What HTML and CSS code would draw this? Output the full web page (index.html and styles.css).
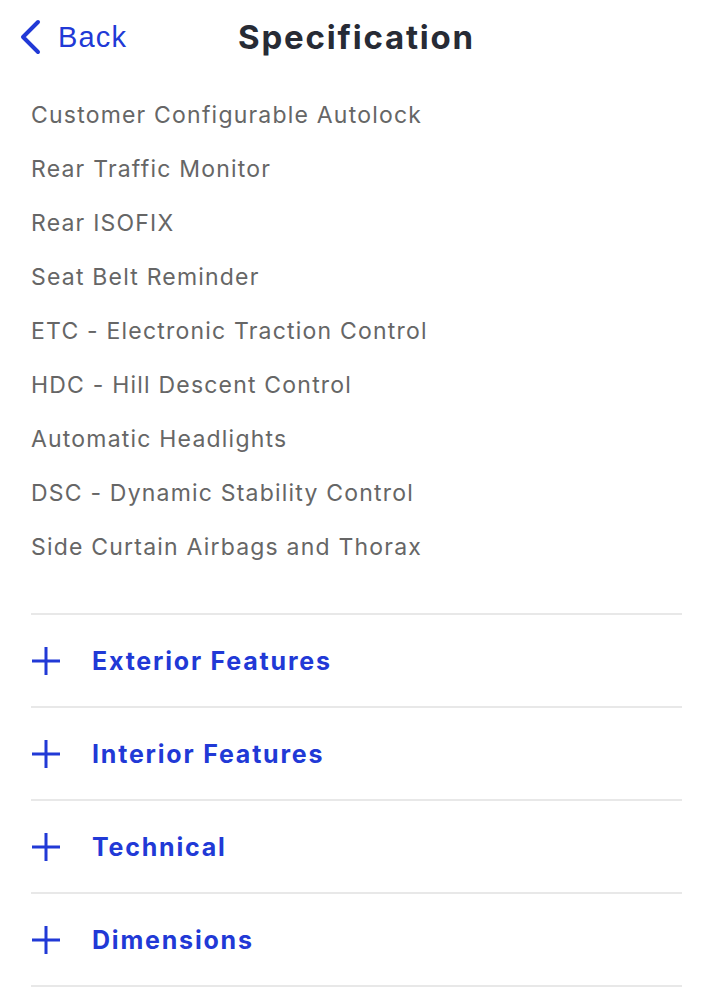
FILE: index.html
```html
<!DOCTYPE html>
<html lang="en">
<head>
    <meta charset="UTF-8">
    <meta name="viewport" content="width=device-width, initial-scale=1.0">
    <title>Specification</title>
    <link rel="stylesheet" href="styles.css">
</head>
<body>
    <div class="topbar">
        <a class="back" href="#">
            <svg class="chevron" width="24" height="36" viewBox="0 0 24 36">
                <path d="M20 3 L5 18 L20 33" fill="none" stroke="#2139d6" stroke-width="4" stroke-linecap="round" stroke-linejoin="round"/>
            </svg>
            <span>Back</span>
        </a>
        <h1 class="title">Specification</h1>
        <div></div>
    </div>

    <ul class="specList">
        <li>Customer Configurable Autolock</li>
        <li>Rear Traffic Monitor</li>
        <li>Rear ISOFIX</li>
        <li>Seat Belt Reminder</li>
        <li>ETC - Electronic Traction Control</li>
        <li>HDC - Hill Descent Control</li>
        <li>Automatic Headlights</li>
        <li>DSC - Dynamic Stability Control</li>
        <li>Side Curtain Airbags and Thorax</li>
    </ul>

    <div class="sections">
        <div class="section">
            <svg class="plus" width="30" height="30" viewBox="0 0 30 30"><path d="M15 1 V29 M1 15 H29" stroke="#2139d6" stroke-width="3"/></svg>
            <span>Exterior Features</span>
        </div>
        <div class="section">
            <svg class="plus" width="30" height="30" viewBox="0 0 30 30"><path d="M15 1 V29 M1 15 H29" stroke="#2139d6" stroke-width="3"/></svg>
            <span>Interior Features</span>
        </div>
        <div class="section">
            <svg class="plus" width="30" height="30" viewBox="0 0 30 30"><path d="M15 1 V29 M1 15 H29" stroke="#2139d6" stroke-width="3"/></svg>
            <span>Technical</span>
        </div>
        <div class="section">
            <svg class="plus" width="30" height="30" viewBox="0 0 30 30"><path d="M15 1 V29 M1 15 H29" stroke="#2139d6" stroke-width="3"/></svg>
            <span>Dimensions</span>
        </div>
    </div>
</body>
</html>
```

FILE: styles.css
```css
body {
    margin: 0;
    background-color: #fff;
    font-family: Inter, "Noto Sans", sans-serif;
}

.topbar {
    display: grid;
    grid-template-columns: 1fr auto 1fr;
    align-items: center;
    height: 74px;
    padding: 0 18px;
}

.back {
    display: flex;
    align-items: center;
    gap: 16px;
    color: #2139d6;
    text-decoration: none;
    font-family: "Liberation Sans", Arial, sans-serif;
    font-size: 29px;
    letter-spacing: 1.2px;
}

.chevron {
    display: block;
}

.title {
    margin: 0;
    font-size: 33px;
    font-weight: 700;
    color: #272b35;
    letter-spacing: 1.8px;
}

.specList {
    list-style: none;
    margin: 0;
    padding: 14px 31px 0;
}

.specList li {
    height: 54px;
    line-height: 54px;
    font-size: 23px;
    color: #666;
    letter-spacing: 1.2px;
}

.sections {
    margin: 39px 31px 0;
    border-top: 2px solid #e8e8e8;
}

.section {
    display: flex;
    align-items: center;
    gap: 31px;
    height: 91px;
    border-bottom: 2px solid #e8e8e8;
    color: #2139d6;
    font-size: 25px;
    font-weight: 700;
    letter-spacing: 1.8px;
}

.plus {
    display: block;
}
```
